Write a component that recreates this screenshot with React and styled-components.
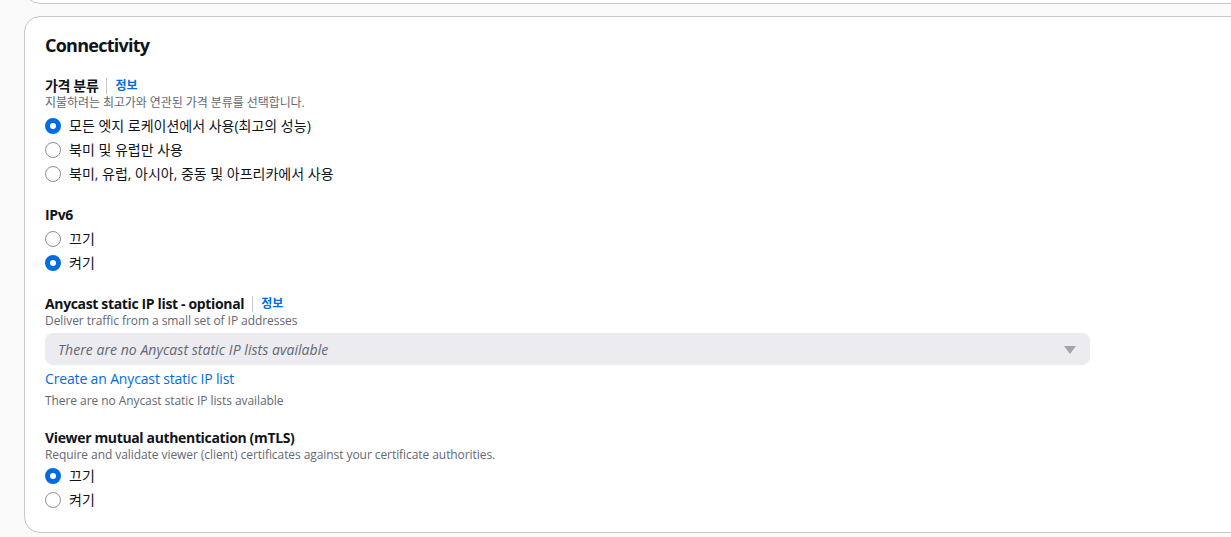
import React from 'react';
import styled, { createGlobalStyle } from 'styled-components';

const GlobalStyle = createGlobalStyle`
  html, body {
    margin: 0;
    padding: 0;
    background: #fafafa;
    overflow: hidden;
  }
  body {
    font-family: 'Open Sans', 'Noto Sans CJK KR', sans-serif;
    color: #0f141a;
    -webkit-font-smoothing: antialiased;
  }
`;

const Page = styled.div`
  display: flex;
  flex-direction: column;
  gap: 12px;
  padding: 0 0 0 24px;
  width: 1260px;
`;

const Card = styled.section`
  box-sizing: border-box;
  background: #ffffff;
  border: 1px solid #c6c6cd;
  border-radius: 16px;
  ${(p) => p.$cut && `
    height: 44px;
    margin-top: -40px;
  `}
`;

const Body = styled.div`
  display: flex;
  flex-direction: column;
  gap: 20px;
  padding: 17px 20px 20px 20px;
`;

const Heading = styled.h2`
  margin: 0 0 1px 0;
  font-size: 18px;
  line-height: 22px;
  font-weight: 700;
  letter-spacing: -0.75px;
`;

const Field = styled.div`
  display: flex;
  flex-direction: column;
`;

const LabelRow = styled.div`
  display: flex;
  align-items: center;
  height: 18px;
`;

const Label = styled.span`
  font-size: 14px;
  line-height: 18px;
  font-weight: 700;
  letter-spacing: -0.35px;
`;

const Info = styled.a`
  margin-left: 8px;
  padding-left: 8px;
  border-left: 1px solid #c6c6cd;
  font-size: 12px;
  line-height: 16px;
  font-weight: 700;
  color: #006ce0;
  text-decoration: none;
`;

const Description = styled.div`
  font-size: 12px;
  line-height: 16px;
  color: #656871;
  letter-spacing: -0.07px;
`;

const Hint = styled(Description)`
  margin-top: 4px;
`;

const RadioGroup = styled.div`
  display: flex;
  flex-direction: column;
  margin-top: ${(p) => p.$top}px;
`;

const RadioItem = styled.label`
  display: flex;
  align-items: center;
  gap: 8px;
  padding: 2px 0;
  font-size: 14px;
  line-height: 20px;
`;

const Dot = styled.span`
  box-sizing: border-box;
  width: 16px;
  height: 16px;
  border-radius: 50%;
  flex-shrink: 0;
  background: #ffffff;
  border: ${(p) => (p.$checked ? '5px solid #006ce0' : '1.5px solid #8c8c94')};
`;

const Select = styled.div`
  box-sizing: border-box;
  width: 1045px;
  height: 32px;
  margin-top: 4px;
  display: flex;
  align-items: center;
  justify-content: space-between;
  padding: 0 14px 0 13px;
  background: #ebebf0;
  border-radius: 8px;
  font-size: 14px;
  font-style: italic;
  letter-spacing: 0.05px;
  color: #656871;
`;

const Caret = styled.span`
  width: 0;
  height: 0;
  border-left: 6px solid transparent;
  border-right: 6px solid transparent;
  border-top: 8px solid #a4a4ad;
  margin-top: 1px;
`;

const Link = styled.a`
  margin-top: 4px;
  font-size: 14px;
  line-height: 20px;
  letter-spacing: -0.15px;
  color: #006ce0;
  text-decoration: none;
`;

const Radios = ({ options, checked, top = 3 }) => (
  <RadioGroup $top={top}>
    {options.map((o, i) => (
      <RadioItem key={o}>
        <Dot $checked={i === checked} />
        {o}
      </RadioItem>
    ))}
  </RadioGroup>
);

export default function App() {
  return (
    <>
      <GlobalStyle />
      <Page>
        <Card $cut />
        <Card>
          <Body>
            <Heading>Connectivity</Heading>
            <Field>
              <LabelRow>
                <Label>가격 분류</Label>
                <Info>정보</Info>
              </LabelRow>
              <Description>지불하려는 최고가와 연관된 가격 분류를 선택합니다.</Description>
              <Radios
                checked={0}
                options={[
                  '모든 엣지 로케이션에서 사용(최고의 성능)',
                  '북미 및 유럽만 사용',
                  '북미, 유럽, 아시아, 중동 및 아프리카에서 사용',
                ]}
              />
            </Field>
            <Field>
              <LabelRow>
                <Label>IPv6</Label>
              </LabelRow>
              <Radios checked={1} options={['끄기', '켜기']} />
            </Field>
            <Field>
              <LabelRow>
                <Label>Anycast static IP list - optional</Label>
                <Info>정보</Info>
              </LabelRow>
              <Description>Deliver traffic from a small set of IP addresses</Description>
              <Select>
                There are no Anycast static IP lists available
                <Caret />
              </Select>
              <Link>Create an Anycast static IP list</Link>
              <Hint>There are no Anycast static IP lists available</Hint>
            </Field>
            <Field>
              <LabelRow>
                <Label>Viewer mutual authentication (mTLS)</Label>
              </LabelRow>
              <Description>
                Require and validate viewer (client) certificates against your certificate authorities.
              </Description>
              <Radios checked={0} top={1} options={['끄기', '켜기']} />
            </Field>
          </Body>
        </Card>
      </Page>
    </>
  );
}
